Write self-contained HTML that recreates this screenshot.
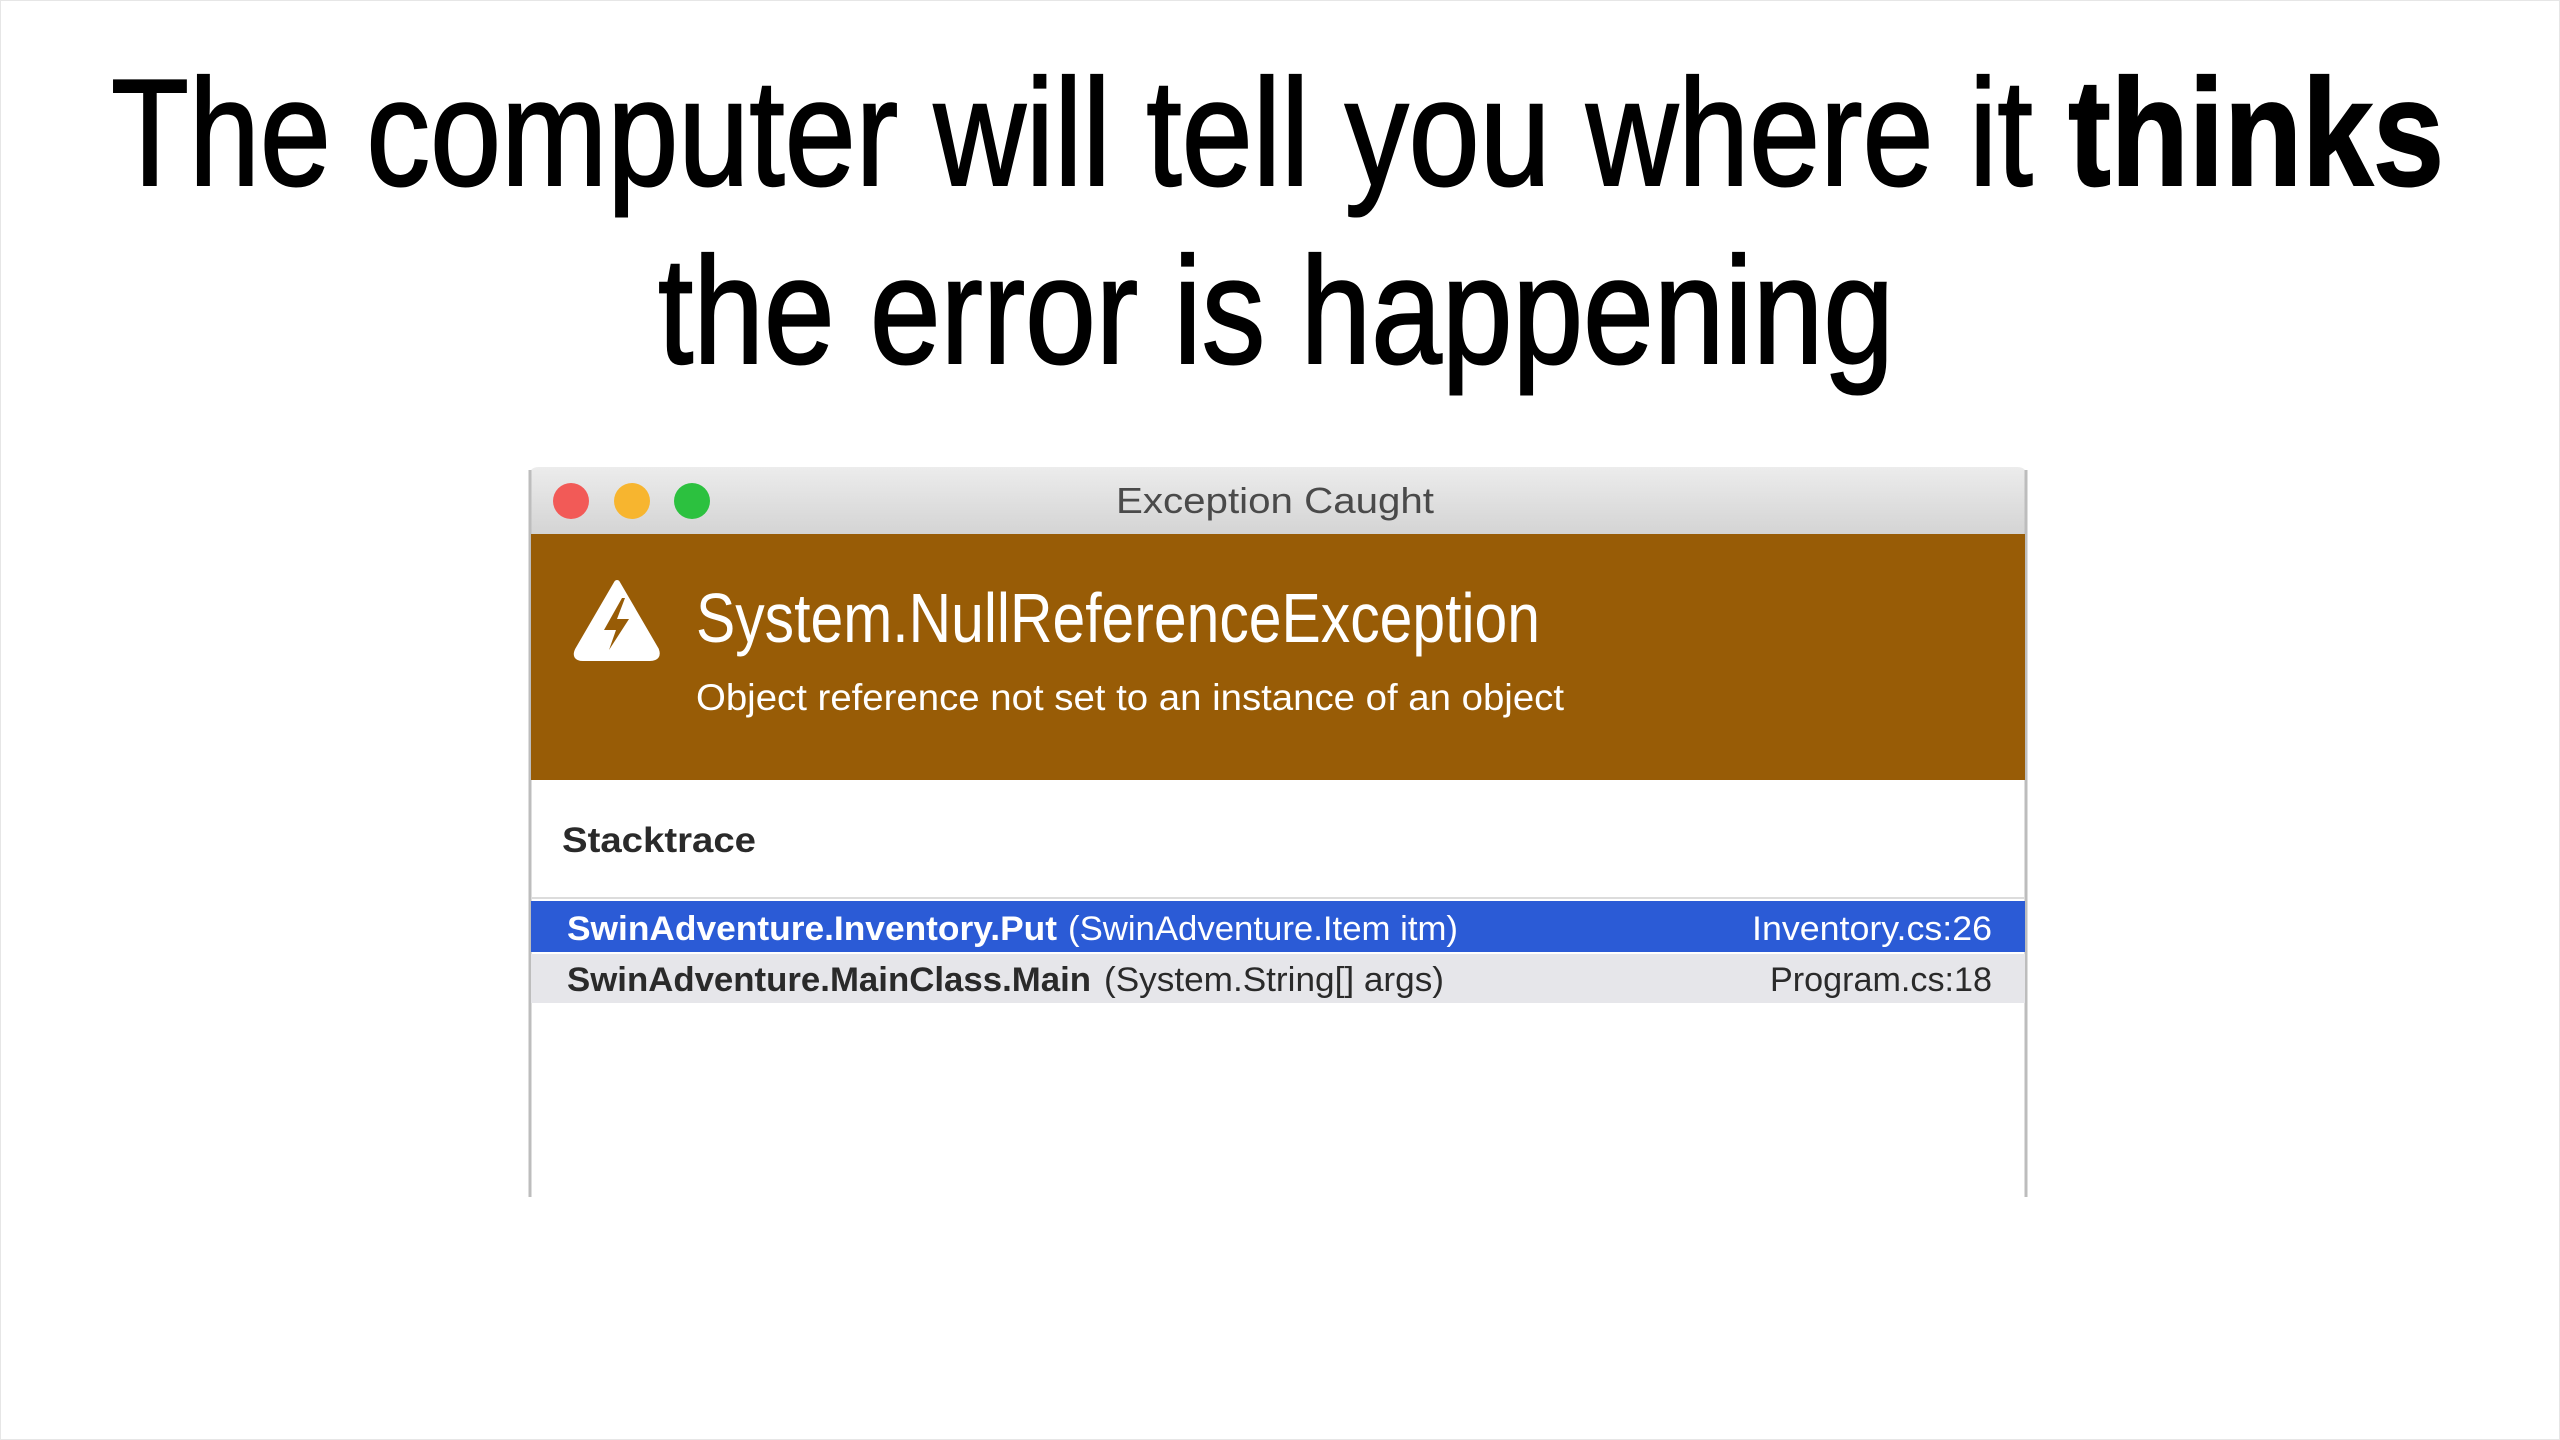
<!DOCTYPE html>
<html><head><meta charset="utf-8">
<style>
html,body{margin:0;padding:0;background:#fff;width:2560px;height:1440px;overflow:hidden}
svg{display:block}
text{font-family:"Liberation Sans",sans-serif}
</style></head>
<body>
<svg width="2560" height="1440" viewBox="0 0 2560 1440" xmlns="http://www.w3.org/2000/svg">
<defs>
<linearGradient id="tb" x1="0" y1="0" x2="0" y2="1">
<stop offset="0" stop-color="#ececec"/><stop offset="1" stop-color="#d4d4d4"/>
</linearGradient>
</defs>
<rect width="2560" height="1440" fill="#fff"/>
<rect x="0.5" y="0.5" width="2559" height="1439" fill="none" stroke="#e6e6e6"/>
<!-- Title -->
<text x="111" y="185" font-size="152" fill="#000" stroke="#000" stroke-width="2" textLength="2333" lengthAdjust="spacingAndGlyphs">The computer will tell you where it <tspan font-weight="bold">thinks</tspan></text>
<text x="658" y="363" font-size="152" fill="#000" stroke="#000" stroke-width="2" textLength="1236" lengthAdjust="spacingAndGlyphs">the error is happening</text>

<!-- Window -->
<rect x="529" y="467" width="1498" height="730" fill="#fff"/>
<path d="M529 477 Q529 467 539 467 L2017 467 Q2027 467 2027 477 L2027 534 L529 534 Z" fill="url(#tb)"/>
<line x1="530" y1="470" x2="530" y2="1197" stroke="#bdbdbd" stroke-width="3"/>
<line x1="2026" y1="470" x2="2026" y2="1197" stroke="#bdbdbd" stroke-width="3"/>
<circle cx="571" cy="501" r="18" fill="#f25a57"/>
<circle cx="632" cy="501" r="18" fill="#f7b52f"/>
<circle cx="692" cy="501" r="18" fill="#2cc13f"/>
<text x="1116" y="513" font-size="36" fill="#4a4a4a" textLength="318" lengthAdjust="spacingAndGlyphs">Exception Caught</text>

<rect x="531" y="534" width="1494" height="246" fill="#985c06"/>
<path d="M617 583 L656 650 Q659 658 650 658 L583 658 Q574 658 578 650 Z" fill="#fff" stroke="#fff" stroke-width="6" stroke-linejoin="round"/>
<path d="M622 598 L604 630 L616 630 L609 650 L629 619 L617 619 L625 598 Z" fill="#985c06"/>
<text x="696" y="642" font-size="70" fill="#fff" textLength="844" lengthAdjust="spacingAndGlyphs">System.NullReferenceException</text>
<text x="696" y="710" font-size="37" fill="#fff" textLength="868" lengthAdjust="spacingAndGlyphs">Object reference not set to an instance of an object</text>

<text x="562" y="852" font-size="35" font-weight="bold" fill="#2a2a2a" textLength="194" lengthAdjust="spacingAndGlyphs">Stacktrace</text>
<line x1="531" y1="898" x2="2025" y2="898" stroke="#dcdcdc" stroke-width="2"/>

<rect x="531" y="901" width="1494" height="51" fill="#2b5bd6"/>
<text x="567" y="940" font-size="34" font-weight="bold" fill="#fff" textLength="490" lengthAdjust="spacingAndGlyphs">SwinAdventure.Inventory.Put</text>
<text x="1068" y="940" font-size="34" fill="#fff" textLength="390" lengthAdjust="spacingAndGlyphs">(SwinAdventure.Item itm)</text>
<text x="1752" y="940" font-size="34" fill="#fff" textLength="240" lengthAdjust="spacingAndGlyphs">Inventory.cs:26</text>

<rect x="531" y="954" width="1494" height="49" fill="#e6e6ea"/>
<text x="567" y="991" font-size="34" font-weight="bold" fill="#2a2a2a" textLength="524" lengthAdjust="spacingAndGlyphs">SwinAdventure.MainClass.Main</text>
<text x="1104" y="991" font-size="34" fill="#2a2a2a" textLength="340" lengthAdjust="spacingAndGlyphs">(System.String[] args)</text>
<text x="1770" y="991" font-size="34" fill="#2a2a2a" textLength="222" lengthAdjust="spacingAndGlyphs">Program.cs:18</text>
</svg>
</body></html>
